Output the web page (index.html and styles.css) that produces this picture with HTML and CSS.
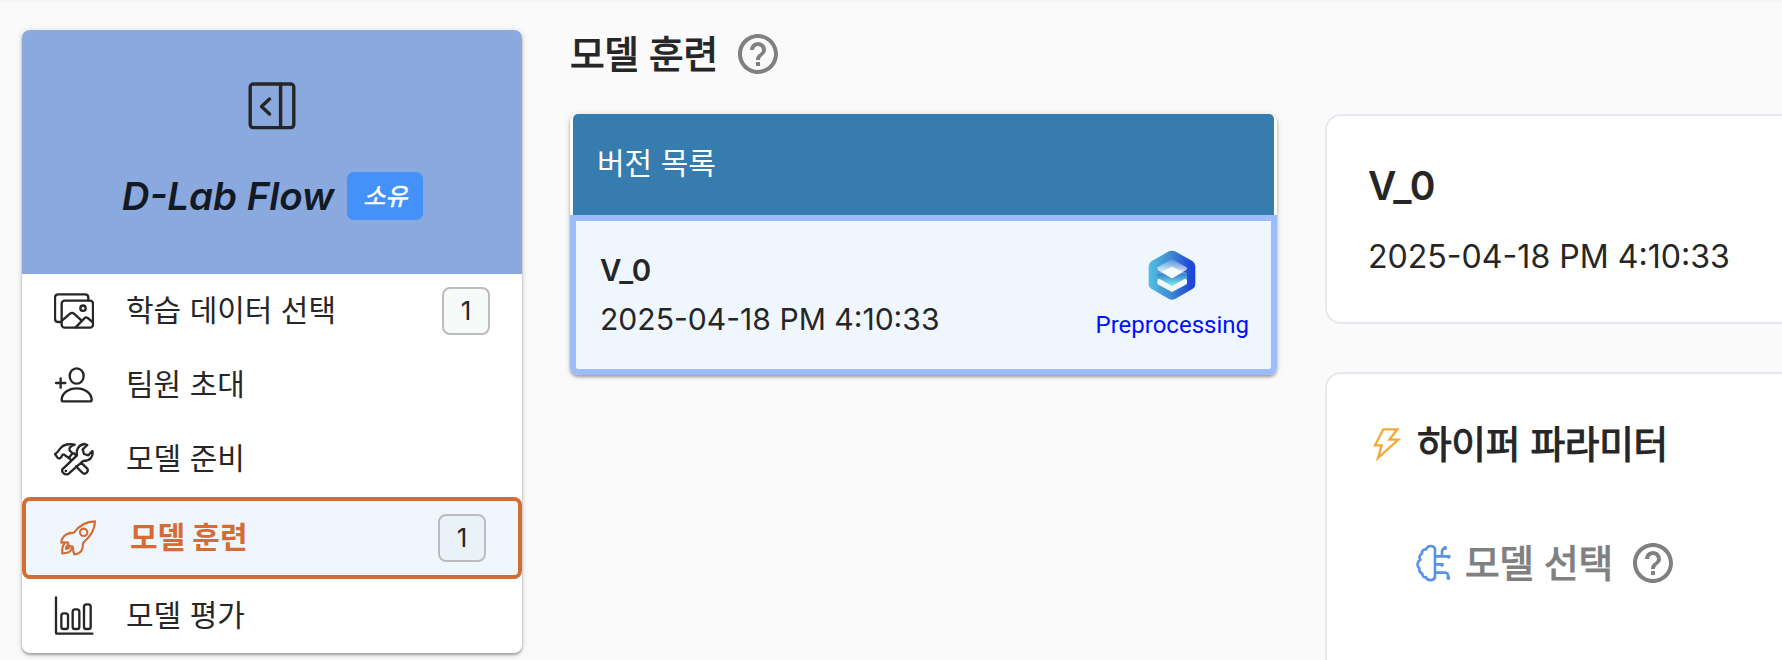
FILE: index.html
```html
<!DOCTYPE html>
<html lang="ko">
<head>
<meta charset="utf-8">
<title>D-Lab Flow</title>
<link rel="stylesheet" href="styles.css">
</head>
<body>
<div class="page">
  <aside class="sidebar">
    <header class="project">
      <svg class="collapse" viewBox="0 0 48 48"><rect x="2.2" y="2" width="43.6" height="43.6" rx="3"/><path d="M32.6 2v43.500M21.500 17l-8 7.500 8 7.500"/></svg>
      <h1 class="project-name">D-Lab Flow<span class="owner">소유</span></h1>
    </header>
    <nav class="menu">
      <a class="item">
        <svg class="icon" viewBox="162 63 120 120"><path d="M182 156h-7q-10 0-10-10V83q0-10 10-10h80q10 0 10 10v8"/><rect x="185" y="92" width="94" height="81" rx="9"/><circle cx="249" cy="114.500" r="8"/><path d="M186 152l24-21q6-5 12 0l22 20M227 172l26-27q5-5 10-1l16 13"/></svg>
        <span class="label">학습 데이터 선택</span><span class="count">1</span>
      </a>
      <a class="item">
        <svg class="icon" viewBox="162 286 120 120"><ellipse cx="230" cy="319" rx="21" ry="23"/><path d="M190 395h80q5 0 5-5c-1-20-21-34-45-34s-44 14-45 34q0 5 5 5zM168 340h28M182 326v28"/></svg>
        <span class="label">팀원 초대</span>
      </a>
      <a class="item">
        <svg class="icon" viewBox="162 510 120 120"><path d="M165 555c8-3 10-9 16-17 9-12 28-15 43-11-9 3-16 8-16 14 0 6 5 8 10 12l-12 14-15-11c-8 1-4 10-12 12q-4 1-7-3zM206 565l6 7M222 553l7 7"/><path d="M187 601l44-42c-3-17 4-32 23-34l8 3-14 13 4 14 13 4 12-13c4 17-8 31-28 30l-43 38q-8 5-15-1-7-6-4-12zM243 581l19 18q4 6-2 12-7 6-12 1l-20-20"/><path d="M197 606h1"/></svg>
        <span class="label">모델 준비</span>
      </a>
      <a class="item active">
        <svg class="icon" viewBox="174 114 120 120"><path d="M285 124c-28 0-47 12-63 34-15 1-22 2-30 11-8 8-8 13-8 19 7-1 13-1 20 0q-1 11 14 12l1 5c0 7 0 12 4 18 8-1 15-3 20-9 7-8 5-16 6-25 20-17 36-37 36-65z"/><circle cx="251" cy="157" r="11"/><path d="M193 191c-7 7-7 17-6 29 12-1 26 0 28-15M203 196q-7 5-4 11 7-1 9-6"/></svg>
        <span class="label">모델 훈련</span><span class="count">1</span>
      </a>
      <a class="item">
        <svg class="icon" viewBox="162 348 120 120"><path d="M168 352v106q0 3 3 3h106"/><rect x="184" y="400" width="20" height="47" rx="7"/><rect x="218" y="388" width="20" height="59" rx="7"/><rect x="252" y="373" width="20" height="74" rx="7"/></svg>
        <span class="label">모델 평가</span>
      </a>
    </nav>
  </aside>

  <main class="main">
    <div class="title-row">
      <h2 class="title heading">모델 훈련</h2>
      <svg class="help" viewBox="0 0 24 24"><path d="M11 18h2v-2h-2v2zm1-16C6.480 2 2 6.480 2 12s4.480 10 10 10 10-4.480 10-10S17.520 2 12 2zm0 18c-4.410 0-8-3.590-8-8s3.590-8 8-8 8 3.590 8 8-3.590 8-8 8zm0-14c-2.210 0-4 1.790-4 4h2c0-1.100.9-2 2-2s2 .9 2 2c0 2-3 1.750-3 5h2c0-2.250 3-2.500 3-5 0-2.210-1.790-4-4-4z"/></svg>
    </div>
    <div class="columns">
      <section class="versions">
        <div class="versions-head">버전 목록</div>
        <div class="version">
          <div class="version-info">
            <strong class="version-name">V_0</strong>
            <span class="version-date">2025-04-18 PM 4:10:33</span>
          </div>
          <div class="status">
            <svg class="status-icon" viewBox="296 150 144 150">
              <defs>
                <linearGradient id="hex" x1="0" x2="1"><stop offset="0" stop-color="#52c0e2"/><stop offset=".5" stop-color="#3c86d2"/><stop offset=".9" stop-color="#1f48d8"/></linearGradient>
                <linearGradient id="top" x1="0" x2="0" y1="0" y2="1"><stop offset="0" stop-color="#fff" stop-opacity=".1"/><stop offset=".6" stop-color="#fff" stop-opacity=".75"/><stop offset="1" stop-color="#fff"/></linearGradient>
                <linearGradient id="mid" x1="0" x2="0" y1="0" y2="1"><stop offset="0" stop-color="#fff" stop-opacity=".65"/><stop offset=".4" stop-color="#3a86d4"/><stop offset="1" stop-color="#7ff5e6"/></linearGradient>
              </defs>
              <path fill="url(#hex)" d="M359 154q9-4 18 0l52 29q9 6 9 15v54q0 10-9 15l-52 30q-9 4-18 0l-52-30q-9-5-9-15v-54q0-9 9-15z"/>
              <path fill="url(#mid)" d="M324 220l44-20 45 20v17l-45 22-44-22z"/>
              <path fill="url(#top)" d="M368 177l41 23q8 5 0 11l-41 24-41-24q-7-6 0-11z"/>
              <path fill="#fff" fill-opacity=".75" d="M368 200l31 17-31 18-31-18z"/>
              <path fill="#f3f8ff" d="M324 240q2-5 8-2l36 20 36-20q7-3 9 2v9q0 4-5 6l-40 21-39-21q-5-2-5-6z"/>
            </svg>
            <span class="status-text">Preprocessing</span>
          </div>
        </div>
      </section>
      <div class="details">
        <section class="panel summary">
          <strong class="summary-name">V_0</strong>
          <span class="summary-date">2025-04-18 PM 4:10:33</span>
        </section>
        <section class="panel params">
          <div class="params-title">
            <svg class="bolt" viewBox="190 200 84 102"><path d="M221 207h42l-24 31h27l-61 55 11-38h-20z"/></svg>
            <h3 class="heading">하이퍼 파라미터</h3>
          </div>
          <div class="model-row">
            <svg class="brain" viewBox="318 552 108 114"><path d="M375 566c-5-11-22-11-27 2-8-1-13 5-12 13-8 4-9 11-5 18-10 7-11 20-3 26-1 9 3 14 9 17 1 7 5 11 11 10 5 11 22 11 27 0zM375 589h42M396 588v-13q0-9 9-11M375 613h20M375 638h30q10 0 10 15"/><g class="dots"><circle cx="405" cy="564" r="6"/><circle cx="416" cy="590" r="6"/><circle cx="396" cy="614" r="6"/><circle cx="415" cy="654" r="6"/></g></svg>
            <h3 class="heading muted">모델 선택</h3>
            <svg class="help" viewBox="0 0 24 24"><path d="M11 18h2v-2h-2v2zm1-16C6.480 2 2 6.480 2 12s4.480 10 10 10 10-4.480 10-10S17.520 2 12 2zm0 18c-4.410 0-8-3.590-8-8s3.590-8 8-8 8 3.590 8 8-3.590 8-8 8zm0-14c-2.210 0-4 1.790-4 4h2c0-1.100.9-2 2-2s2 .9 2 2c0 2-3 1.750-3 5h2c0-2.250 3-2.500 3-5 0-2.210-1.790-4-4-4z"/></svg>
          </div>
        </section>
      </div>
    </div>
  </main>
</div>
</body>
</html>
```
FILE: styles.css
```css
* { box-sizing: border-box; }
body {
  margin: 0;
  background: #fafafa;
  color: #262626;
  font-family: Inter, "Noto Sans CJK KR", sans-serif;
}
h1, h2, h3 { margin: 0; }
svg { display: block; flex: none; }
.page {
  display: flex;
  height: 660px;
  overflow: hidden;
  border-top: 2px solid #f6f6f6;
  padding: 28px 0 0 22px;
}
.sidebar {
  width: 500px;
  height: 623px;
  flex: none;
  background: #fff;
  border-radius: 8px;
  box-shadow: 0 2px 3px rgba(0, 0, 0, .32), 0 1px 7px rgba(0, 0, 0, .12);
}
.project {
  height: 244px;
  padding-top: 52px;
  display: flex;
  flex-direction: column;
  align-items: center;
  background: #8aa9de;
  border-radius: 8px 8px 0 0;
}
.collapse { width: 48px; height: 48px; fill: none; stroke: #262626; stroke-width: 3.4; stroke-linecap: round; stroke-linejoin: round; }
.project-name {
  display: flex;
  align-items: center;
  gap: 13px;
  margin-top: 42px;
  padding-left: 1px;
  font-size: 38.400px;
  line-height: 48px;
  font-style: italic;
  font-weight: 600;
  color: #141a24;
}
.owner {
  width: 76px;
  height: 48px;
  border-radius: 7px;
  background: #4391f9;
  color: #fff;
  font-size: 24px;
  font-weight: 400;
  line-height: 50px;
  -webkit-text-stroke: .5px currentColor;
  text-align: center;
}
.item {
  display: flex;
  align-items: center;
  height: 74px;
  padding: 0 32px;
}
.icon { width: 40px; height: 40px; fill: none; stroke: currentColor; stroke-width: 7; stroke-linecap: round; stroke-linejoin: round; }
.label { margin-left: 32px; padding-bottom: 1px; flex: 1; font-size: 30px; line-height: 43px; }
.count {
  width: 48px;
  height: 48px;
  border: 2px solid #bcbcbc;
  border-radius: 8px;
  background: #f6faf9;
  font-size: 26px;
  line-height: 44px;
  text-align: center;
}
.active { height: 82px; margin-top: 1px; border: 4px solid #d56c33; border-radius: 8px; background: #eff6fe; color: #d56c33; }
.active .label { font-weight: 700; }
.active .icon { stroke-width: 6.500; }
.active .count { color: #262626; background: #e9f1f9; }

.main { flex: 1; min-width: 0; padding-left: 48px; }
.title-row { display: flex; align-items: center; height: 48px; }
.title { width: 164px; }
.heading {
  font-size: 37.700px;
  line-height: 48px;
  font-weight: 400;
  letter-spacing: -.300px;
  white-space: nowrap;
  -webkit-text-stroke: 1.100px currentColor;
}
.help { width: 48px; height: 48px; fill: #808080; }
.columns { display: flex; align-items: flex-start; gap: 48px; margin-top: 36px; }
.versions {
  width: 707px;
  height: 261px;
  flex: none;
  background: #fff;
  border-radius: 8px;
  box-shadow: 0 2px 3px rgba(0, 0, 0, .32), 0 1px 7px rgba(0, 0, 0, .12);
}
.versions-head {
  height: 101px;
  margin: 0 3px;
  padding: 0 24px;
  border-radius: 5px 5px 0 0;
  background: #367cae;
  color: #fff;
  font-size: 30px;
  line-height: 98px;
}
.version {
  display: flex;
  justify-content: space-between;
  height: 160px;
  padding: 29px 22px 0 24px;
  border: 6px solid #9dbcfb;
  border-radius: 0 0 8px 8px;
  background: #eff6fe;
}
.version-info { display: flex; flex-direction: column; gap: 9px; }
.version-name { font-size: 29.500px; line-height: 40px; font-weight: 600; }
.version-date { font-size: 30.100px; line-height: 40px; }
.status { display: flex; flex-direction: column; align-items: center; }
.status-icon { width: 48px; height: 50px; }
.status-text { margin-top: 9px; color: #0010ff; font-family: Roboto, sans-serif; font-size: 24px; line-height: 32px; }

.details { flex: 1; min-width: 0; display: flex; flex-direction: column; gap: 48px; }
.panel {
  border: 2px solid #e6e9f0;
  border-right: 0;
  border-radius: 16px 0 0 16px;
  background: #fff;
}
.summary { display: flex; flex-direction: column; gap: 23px; height: 210px; padding: 46px 41px; }
.summary-name { font-size: 39px; line-height: 48px; font-weight: 600; }
.summary-date { font-size: 32.100px; line-height: 48px; }
.params { height: 400px; padding: 46px 0 0 46px; }
.params-title { display: flex; align-items: center; gap: 16px; }
.bolt { width: 28px; height: 34px; fill: none; stroke: #f5a83a; stroke-width: 7; }
.model-row { display: flex; align-items: center; margin: 71px 0 0 43px; }
.brain { width: 36px; height: 38px; fill: none; stroke: #5a92e4; stroke-width: 8; stroke-linecap: round; }
.dots { fill: #5a92e4; stroke: none; }
.muted { width: 164px; margin-left: 13px; color: #808080; }
```
